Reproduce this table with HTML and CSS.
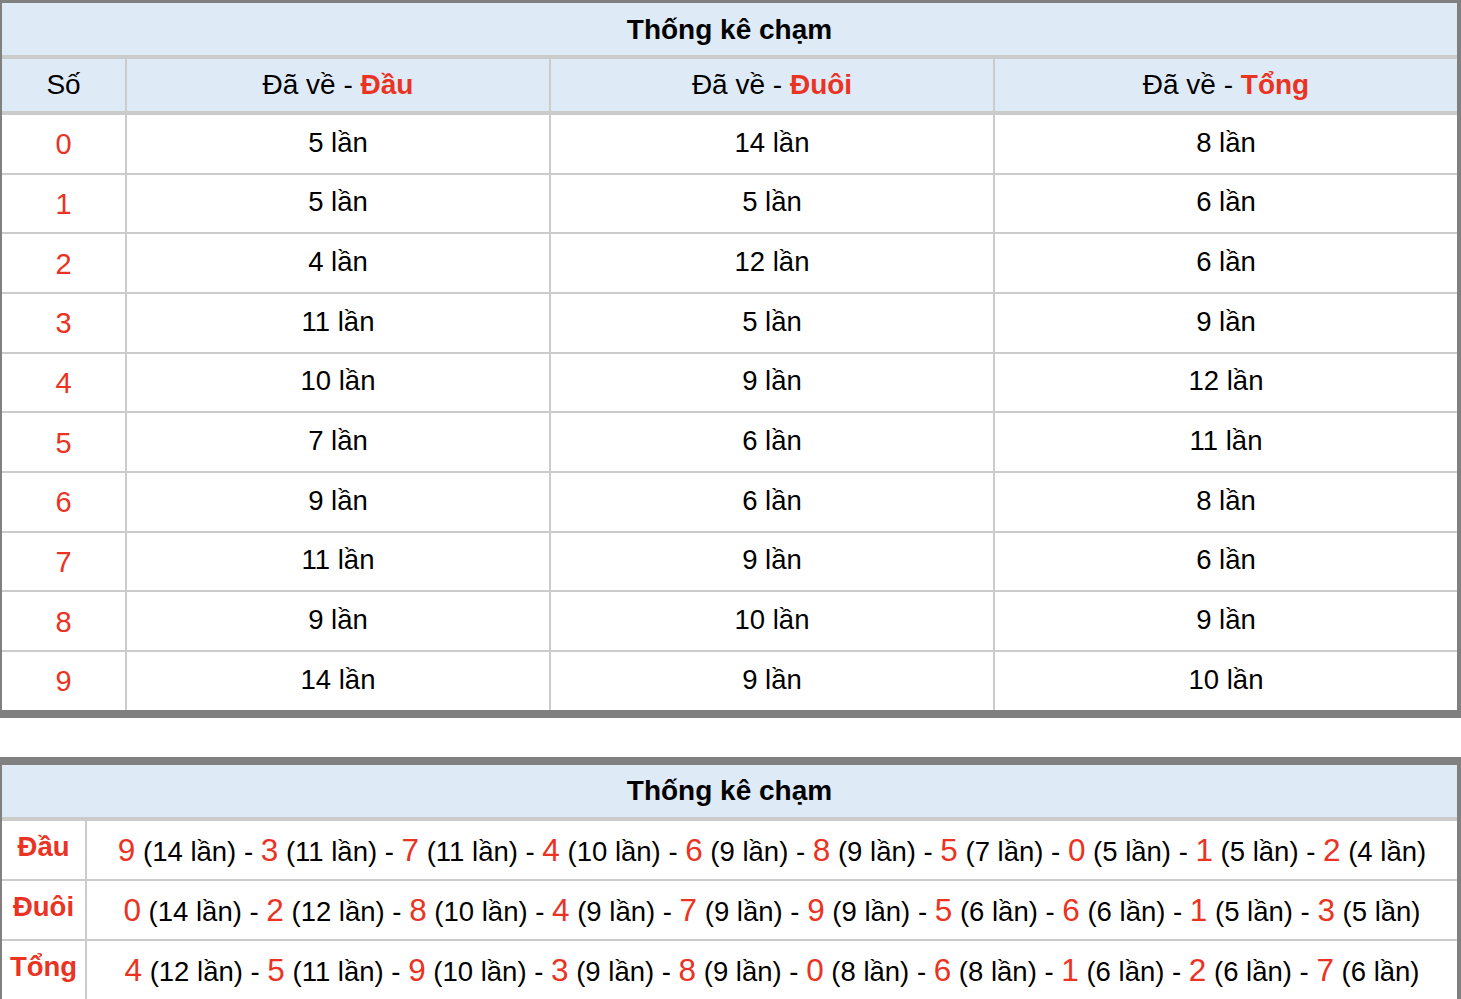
FILE: index.html
```html
<!DOCTYPE html>
<html lang="vi">
<head>
<meta charset="utf-8">
<title>Thống kê chạm</title>
<link rel="stylesheet" href="styles.css">
</head>
<body>
<div class="box box-first">
  <table class="stat">
    <colgroup>
      <col class="c1"><col class="c2"><col class="c3"><col class="c4">
    </colgroup>
    <thead>
      <tr><th class="title" colspan="4">Thống kê chạm</th></tr>
      <tr class="head">
        <th>Số</th>
        <th>Đã về - <b class="red">Đầu</b></th>
        <th>Đã về - <b class="red">Đuôi</b></th>
        <th>Đã về - <b class="red">Tổng</b></th>
      </tr>
    </thead>
    <tbody>
      <tr><td class="num">0</td><td>5 lần</td><td>14 lần</td><td>8 lần</td></tr>
      <tr><td class="num">1</td><td>5 lần</td><td>5 lần</td><td>6 lần</td></tr>
      <tr><td class="num">2</td><td>4 lần</td><td>12 lần</td><td>6 lần</td></tr>
      <tr><td class="num">3</td><td>11 lần</td><td>5 lần</td><td>9 lần</td></tr>
      <tr><td class="num">4</td><td>10 lần</td><td>9 lần</td><td>12 lần</td></tr>
      <tr><td class="num">5</td><td>7 lần</td><td>6 lần</td><td>11 lần</td></tr>
      <tr><td class="num">6</td><td>9 lần</td><td>6 lần</td><td>8 lần</td></tr>
      <tr><td class="num">7</td><td>11 lần</td><td>9 lần</td><td>6 lần</td></tr>
      <tr><td class="num">8</td><td>9 lần</td><td>10 lần</td><td>9 lần</td></tr>
      <tr><td class="num">9</td><td>14 lần</td><td>9 lần</td><td>10 lần</td></tr>
    </tbody>
  </table>
</div>

<div class="box box-second">
  <table class="summary">
    <colgroup>
      <col class="s1"><col class="s2">
    </colgroup>
    <thead>
      <tr><th class="title" colspan="2">Thống kê chạm</th></tr>
    </thead>
    <tbody>
      <tr>
        <th class="label">Đầu</th>
        <td><span class="d">9</span> (14 lần) - <span class="d">3</span> (11 lần) - <span class="d">7</span> (11 lần) - <span class="d">4</span> (10 lần) - <span class="d">6</span> (9 lần) - <span class="d">8</span> (9 lần) - <span class="d">5</span> (7 lần) - <span class="d">0</span> (5 lần) - <span class="d">1</span> (5 lần) - <span class="d">2</span> (4 lần)</td>
      </tr>
      <tr>
        <th class="label">Đuôi</th>
        <td><span class="d">0</span> (14 lần) - <span class="d">2</span> (12 lần) - <span class="d">8</span> (10 lần) - <span class="d">4</span> (9 lần) - <span class="d">7</span> (9 lần) - <span class="d">9</span> (9 lần) - <span class="d">5</span> (6 lần) - <span class="d">6</span> (6 lần) - <span class="d">1</span> (5 lần) - <span class="d">3</span> (5 lần)</td>
      </tr>
      <tr>
        <th class="label">Tổng</th>
        <td><span class="d">4</span> (12 lần) - <span class="d">5</span> (11 lần) - <span class="d">9</span> (10 lần) - <span class="d">3</span> (9 lần) - <span class="d">8</span> (9 lần) - <span class="d">0</span> (8 lần) - <span class="d">6</span> (8 lần) - <span class="d">1</span> (6 lần) - <span class="d">2</span> (6 lần) - <span class="d">7</span> (6 lần)</td>
      </tr>
    </tbody>
  </table>
</div>
</body>
</html>
```

FILE: styles.css
```css
html, body {
  margin: 0;
  padding: 0;
  background: #ffffff;
}

body {
  font-family: "Liberation Sans", Arial, Helvetica, sans-serif;
  color: #000000;
  overflow: hidden;
}

.box {
  border-style: solid;
  border-color: #808080;
  background: #ffffff;
}

.box-first {
  border-width: 3px 4px 8px 2px;
}

.box-second {
  border-width: 8px 4px 0 2px;
  margin-top: 39px;
}

table {
  width: 100%;
  table-layout: fixed;
  border-collapse: separate;
  border-spacing: 0;
}

th, td {
  padding: 0;
  text-align: center;
  vertical-align: middle;
  box-sizing: border-box;
}

.red {
  color: #ea3323;
}

.title {
  background: #deebf7;
  height: 56px;
  font-size: 28px;
  font-weight: bold;
  border-bottom: 4px solid #cbcbcb;
  padding-top: 1px;
}

/* first table */
.c1 { width: 125px; }
.c2 { width: 424px; }
.c3 { width: 444px; }
.c4 { width: 462px; }

.head th {
  background: #deebf7;
  height: 56px;
  font-size: 28px;
  font-weight: normal;
  border-bottom: 4px solid #cbcbcb;
  border-right: 2px solid #cbcbcb;
}

.head th:last-child {
  border-right: 0;
}

.head b {
  font-weight: bold;
}

.stat td {
  height: 59.67px;
  font-size: 27.5px;
  border-bottom: 2px solid #cbcbcb;
  border-right: 2px solid #cbcbcb;
  padding-bottom: 2px;
}

.stat td:last-child {
  border-right: 0;
}

.stat tr:last-child td {
  border-bottom: 0;
  height: 58px;
}

.stat .num {
  color: #ea3323;
  font-size: 29px;
  padding-bottom: 0;
  padding-top: 2px;
}

/* second table */
.s1 { width: 85px; }
.s2 { width: auto; }

.summary td,
.summary .label {
  height: 60px;
  border-bottom: 2px solid #cbcbcb;
}

.summary .label {
  color: #ea3323;
  font-size: 27.5px;
  font-weight: bold;
  border-right: 2px solid #cbcbcb;
  padding-bottom: 6px;
}

.summary td {
  font-size: 27.5px;
  white-space: nowrap;
  padding-top: 2px;
}

.summary .d {
  color: #ea3323;
  font-size: 31.5px;
}
```
